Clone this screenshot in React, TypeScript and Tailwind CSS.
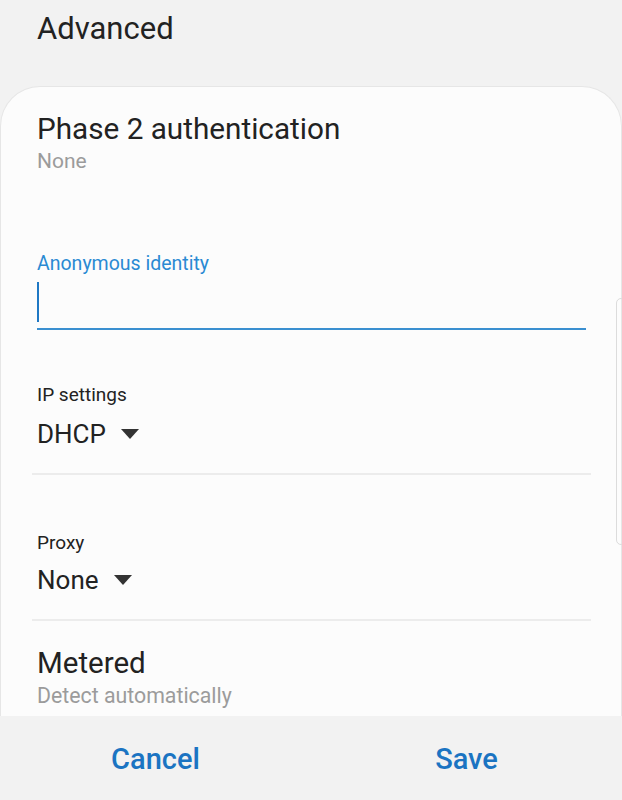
export default function App() {
  return (
    <div className="relative flex h-[800px] w-[622px] flex-col overflow-hidden bg-[#f2f2f2] font-['Roboto',sans-serif] text-[#222222]">
      {/* header */}
      <div className="h-[86px] shrink-0 pl-[37px] pt-[8px]">
        <h1 className="text-[31px] leading-[42px]">Advanced</h1>
      </div>

      {/* card */}
      <div className="flex-1 overflow-hidden rounded-t-[40px] border border-b-0 border-[#e6e6e6] bg-[#fcfcfc]">
        <div className="pl-[36px] pr-[30px] pt-[24px]">
          <div className="text-[29.7px] leading-[36px]">Phase 2 authentication</div>
          <div className="text-[21px] leading-[28px] text-[#9b9b9b]">None</div>

          <div className="mt-[77px] text-[19.5px] leading-[24px] text-[#2a8ad3]">Anonymous identity</div>
          <div className="flex h-[54px] flex-col">
            <div className="mt-[6px] h-[40px] w-[2px] bg-[#1f78c4]" />
            <div className="mt-auto h-[2px] w-[549px] bg-[#3a8fd0]" />
          </div>

          <div className="mt-[53px] text-[19px] leading-[24px]">IP settings</div>
          <div className="mt-[12px] flex items-center gap-[14px]">
            <span className="text-[26px] leading-[30px]">DHCP</span>
            <Caret />
          </div>
        </div>
        <div className="ml-[31px] mr-[30px] mt-[24px] h-[2px] bg-[#ececec]" />

        <div className="pl-[36px] pt-[56px]">
          <div className="text-[19px] leading-[24px]">Proxy</div>
          <div className="mt-[10px] flex items-center gap-[14px]">
            <span className="text-[26px] leading-[30px]">None</span>
            <Caret />
          </div>
        </div>
        <div className="ml-[31px] mr-[30px] mt-[24px] h-[2px] bg-[#ececec]" />

        <div className="pl-[36px] pt-[25px]">
          <div className="text-[29.5px] leading-[34px]">Metered</div>
          <div className="mt-[2px] text-[21.3px] leading-[28px] text-[#9b9b9b]">Detect automatically</div>
        </div>
      </div>

      {/* bottom buttons */}
      <div className="grid h-[84px] shrink-0 grid-cols-2 items-center bg-[#f2f2f2] pt-[4px]">
        <button className="justify-self-center text-[29px] font-medium text-[#1b74c2]">Cancel</button>
        <button className="justify-self-center text-[29px] font-medium text-[#1b74c2]">Save</button>
      </div>

      {/* scroll indicator */}
      <div className="absolute right-[-4px] top-[298px] h-[247px] w-[10px] rounded-[5px] border border-[#dcdcdc]" />
    </div>
  );
}

function Caret() {
  return (
    <svg width="20" height="12" viewBox="0 0 20 12">
      <path d="M1 1h18L10 11z" fill="#333333" />
    </svg>
  );
}
